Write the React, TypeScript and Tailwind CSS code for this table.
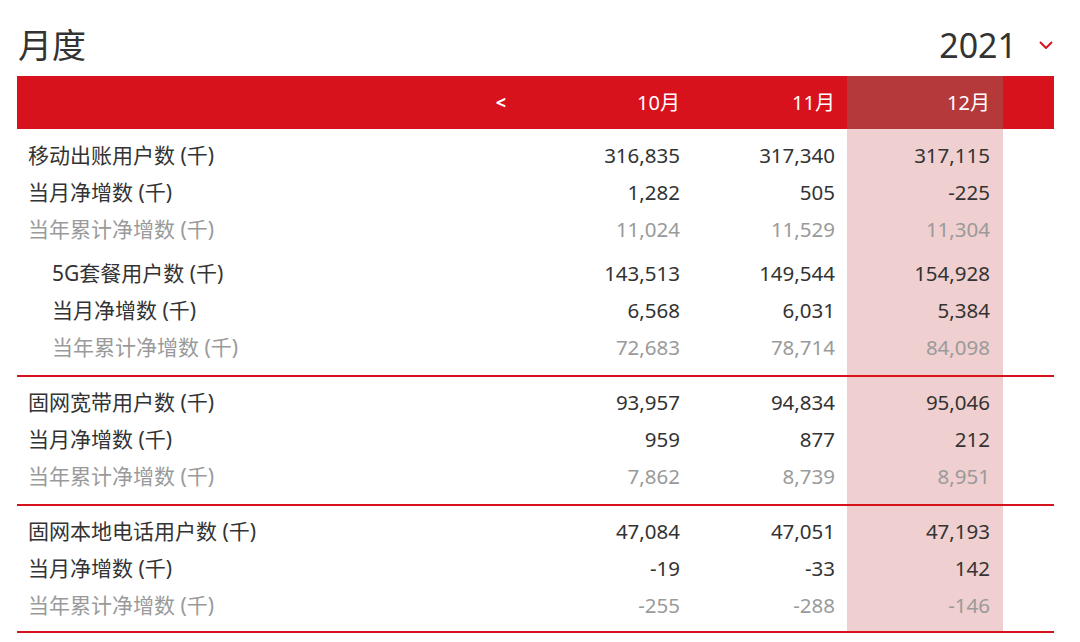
const cols = 'grid grid-cols-[520px_155px_155px_156px_51px]';

type Item = { label: string; values: string[]; tone: 'dark' | 'muted'; indent?: boolean };

const groups: Item[][] = [
  [
    { label: '移动出账用户数 (千)', values: ['316,835', '317,340', '317,115'], tone: 'dark' },
    { label: '当月净增数 (千)', values: ['1,282', '505', '-225'], tone: 'dark' },
    { label: '当年累计净增数 (千)', values: ['11,024', '11,529', '11,304'], tone: 'muted' },
  ],
  [
    { label: '5G套餐用户数 (千)', values: ['143,513', '149,544', '154,928'], tone: 'dark', indent: true },
    { label: '当月净增数 (千)', values: ['6,568', '6,031', '5,384'], tone: 'dark', indent: true },
    { label: '当年累计净增数 (千)', values: ['72,683', '78,714', '84,098'], tone: 'muted', indent: true },
  ],
  [
    { label: '固网宽带用户数 (千)', values: ['93,957', '94,834', '95,046'], tone: 'dark' },
    { label: '当月净增数 (千)', values: ['959', '877', '212'], tone: 'dark' },
    { label: '当年累计净增数 (千)', values: ['7,862', '8,739', '8,951'], tone: 'muted' },
  ],
  [
    { label: '固网本地电话用户数 (千)', values: ['47,084', '47,051', '47,193'], tone: 'dark' },
    { label: '当月净增数 (千)', values: ['-19', '-33', '142'], tone: 'dark' },
    { label: '当年累计净增数 (千)', values: ['-255', '-288', '-146'], tone: 'muted' },
  ],
];

function Spacer({ h }: { h: string }) {
  return (
    <div className={`${cols} ${h}`}>
      <div />
      <div />
      <div />
      <div className="bg-[#efcfcf]" />
      <div />
    </div>
  );
}

function Row({ item }: { item: Item }) {
  const color = item.tone === 'muted' ? 'text-[#9a9a9a]' : 'text-[#333333]';
  return (
    <div className={`${cols} h-[37px] text-[20.5px] ${color}`}>
      <div className={`flex items-center text-[21px] ${item.indent ? 'pl-[35px]' : 'pl-[11px]'}`}>{item.label}</div>
      <div className="flex items-center justify-end pr-3">{item.values[0]}</div>
      <div className="flex items-center justify-end pr-3">{item.values[1]}</div>
      <div className="flex items-center justify-end pr-[13px] bg-[#efcfcf]">{item.values[2]}</div>
      <div />
    </div>
  );
}

export default function App() {
  return (
    <div
      className="w-[1080px] h-[642px] bg-white pl-[17px] pr-[26px] overflow-hidden"
      style={{ fontFamily: '"Noto Sans", "Noto Sans CJK SC", sans-serif' }}
    >
      {/* title row */}
      <div className="h-[76px] pt-[14px] flex items-center justify-between text-[#333333] text-[34px]">
        <span className="pl-[1px]">月度</span>
        <div className="flex items-center gap-[22px]">
          <span>2021</span>
          <svg width="14" height="8" viewBox="0 0 14 8" className="mr-[1px]">
            <polyline points="1,1 7,7 13,1" fill="none" stroke="#d7121c" strokeWidth="2" />
          </svg>
        </div>
      </div>

      {/* header bar */}
      <div className={`${cols} h-[53px] bg-[#d7121c] text-white text-[20px]`}>
        <div className="flex items-center justify-end pr-[31px] text-[18px] font-bold">&lt;</div>
        <div className="flex items-center justify-end pr-3">10月</div>
        <div className="flex items-center justify-end pr-3">11月</div>
        <div className="flex items-center justify-end pr-[13px] bg-[#b5393b]">12月</div>
        <div />
      </div>

      <Spacer h="h-[8px]" />
      {groups[0].map((it, i) => <Row key={i} item={it} />)}
      <Spacer h="h-[7px]" />
      {groups[1].map((it, i) => <Row key={i} item={it} />)}
      {groups.slice(2).map((g, gi) => (
        <div key={gi}>
          <Spacer h="h-[9px]" />
          <div className="h-[2px] bg-[#d7121c]" />
          <Spacer h="h-[7px]" />
          {g.map((it, i) => <Row key={i} item={it} />)}
        </div>
      ))}
      <Spacer h="h-[7px]" />
      <div className="h-[2px] bg-[#d7121c]" />
    </div>
  );
}
